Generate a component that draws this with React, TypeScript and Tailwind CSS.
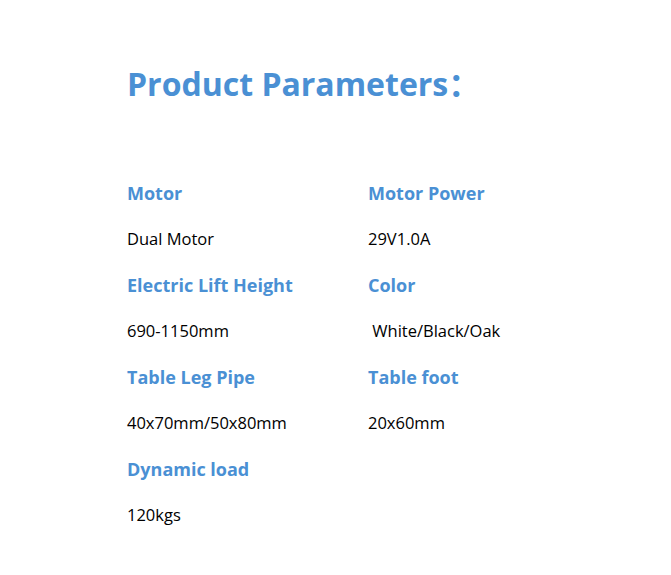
const params: [string, string][][] = [
  [
    ['Motor', 'Dual Motor'],
    ['Motor Power', '29V1.0A'],
  ],
  [
    ['Electric Lift Height', '690-1150mm'],
    ['Color', '\u00a0White/Black/Oak'],
  ],
  [
    ['Table Leg Pipe', '40x70mm/50x80mm'],
    ['Table foot', '20x60mm'],
  ],
  [['Dynamic load', '120kgs']],
]

export default function App() {
  return (
    <div className="min-h-[575px] w-[671px] bg-white pl-[127px] pt-[62px] font-['Open_Sans','Noto_Sans_CJK_SC',sans-serif]">
      <h1 className="text-[32px] font-bold leading-[44px] text-[#4a90d4]">
        Product Parameters：
      </h1>

      <div className="mt-[72px] flex flex-col">
        {params.map((row, i) => (
          <div key={i} className="flex">
            {row.map(([label, value]) => (
              <div key={label} className="w-[241px]">
                <div className="h-[50px] text-[18px] font-bold leading-[30px] text-[#4a90d4]">{label}</div>
                <div className="h-[42px] text-[16.5px] leading-[22px] text-black">{value}</div>
              </div>
            ))}
          </div>
        ))}
      </div>
    </div>
  )
}
